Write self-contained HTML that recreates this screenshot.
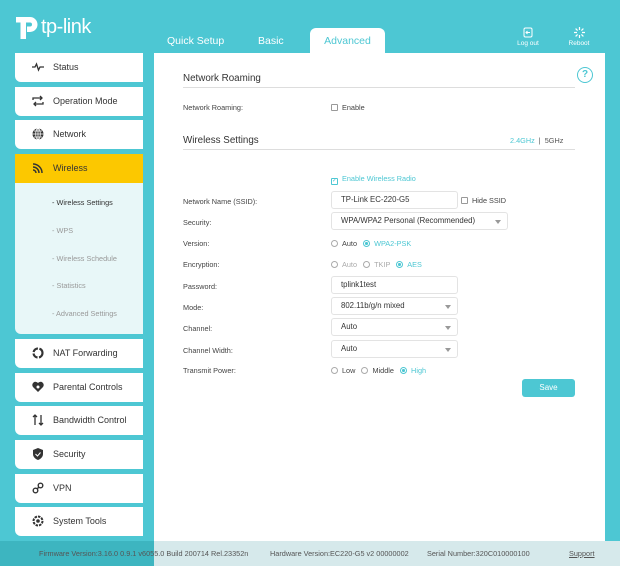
<!DOCTYPE html>
<html><head><meta charset="utf-8"><style>
*{box-sizing:border-box;margin:0;padding:0}
body{width:620px;height:566px;overflow:hidden;background:#4dc7d3;font-family:"Liberation Sans",sans-serif;position:relative}
.abs{position:absolute}
.logo{left:15px;top:14px;color:#fff;font-size:20px;letter-spacing:-0.5px}
.tab{top:35px;color:#fff;font-size:10.5px}
.adv{left:310px;top:28px;width:75px;height:26px;background:#fff;border-radius:6px 6px 0 0;color:#4dc7d3;font-size:10.5px;text-align:center;line-height:26px}
.ti{color:#fff;font-size:6.5px;text-align:center;top:27px}
.panel{left:154px;top:53px;width:451px;height:490px;background:#fff}
.nav{left:15px;width:128px;height:29px;background:#fff;border-radius:0 0 0 6px;font-size:9px;color:#333;line-height:29px;padding-left:38px}
.nav svg{position:absolute;left:17px;top:8px}
.sub{left:15px;top:183px;width:128px;height:151px;background:#e8f7f8;border-radius:0 0 0 6px}
.sub div{position:absolute;left:37px;font-size:7.3px;color:#999}
.h{font-size:9.8px;color:#333}
.line{height:1px;background:#ddd;left:183px;width:392px}
.lab{left:183px;font-size:7.3px;color:#444}
.inp{left:331px;width:127px;height:18px;border:1px solid #e3e3e3;border-radius:3px;font-size:7.8px;color:#333;line-height:16px;padding-left:9px}
.arr{position:absolute;right:6px;top:7px;width:0;height:0;border-left:3px solid transparent;border-right:3px solid transparent;border-top:4px solid #999}
.r{font-size:7.3px;color:#444;left:331px}
.rb{display:inline-block;width:7px;height:7px;border:1px solid #aaa;border-radius:50%;vertical-align:-1px;margin-right:4px}
.rs{border-color:#4dc7d3;background:radial-gradient(#4dc7d3 40%,#fff 50%)}
.cb{display:inline-block;width:7px;height:7px;border:1px solid #999;border-radius:1px;vertical-align:-1px;margin-right:4px}
.foot{left:0;top:541px;width:620px;height:25px;background:#d6e9eb;font-size:7.3px;color:#555;line-height:25px}
</style></head><body>
<div class="abs logo"><svg width="26" height="26" viewBox="0 0 26 26" style="vertical-align:-7px"><path d="M1 3h14a7.5 7.5 0 0 1 0 15h-3v-5.5h3a2 2 0 0 0 0-4H11V25H5.5V8.5H1z" fill="#fff"/></svg>tp-link</div>
<div class="abs tab" style="left:167px">Quick Setup</div>
<div class="abs tab" style="left:258px">Basic</div>
<div class="abs adv">Advanced</div>
<div class="abs ti" style="left:515px;width:26px"><svg width="10" height="11" viewBox="0 0 10 11"><rect x="1" y="1" width="8" height="9" rx="1.5" fill="none" stroke="#fff"/><path d="M7 5.5H3M4.5 4L3 5.5 4.5 7" stroke="#fff" fill="none"/></svg><br>Log out</div>
<div class="abs ti" style="left:566px;width:26px"><svg width="11" height="11" viewBox="0 0 11 11" stroke="#fff" stroke-width="1.2"><path d="M5.5 0v3M5.5 8v3M0 5.5h3M8 5.5h3M1.6 1.6l2 2M7.4 7.4l2 2M9.4 1.6l-2 2M1.6 9.4l2-2"/></svg><br>Reboot</div>

<div class="abs panel"></div>
<div class="abs nav" style="top:53px"><svg width="12" height="12" viewBox="0 0 12 12"><path d="M0 6h3l1.5-3 2 6 1.5-3h4" fill="none" stroke="#333" stroke-width="1.3"/></svg>Status</div>
<div class="abs nav" style="top:87px"><svg width="12" height="12" viewBox="0 0 12 12"><path d="M1 5V3h9M8 1l2 2-2 2M11 7v2H2M4 11L2 9l2-2" fill="none" stroke="#333" stroke-width="1.3"/></svg>Operation Mode</div>
<div class="abs nav" style="top:120px"><svg width="12" height="12" viewBox="0 0 12 12"><circle cx="6" cy="6" r="5.5" fill="#333"/><path d="M0.5 6h11M6 .5v11M2 3h8M2 9h8" stroke="#fff" stroke-width=".8"/><ellipse cx="6" cy="6" rx="2.3" ry="5.5" fill="none" stroke="#fff" stroke-width=".8"/></svg>Network</div>
<div class="abs nav" style="top:154px;background:#fcc800;border-radius:0"><svg width="12" height="12" viewBox="0 0 12 12"><path d="M1 2a9 9 0 0 1 9 9M1 5a6 6 0 0 1 6 6M1 8a3 3 0 0 1 3 3" fill="none" stroke="#333" stroke-width="1.5"/></svg>Wireless</div>
<div class="abs sub"><div style="top:15px;color:#333">- Wireless Settings</div><div style="top:43px">- WPS</div><div style="top:71px">- Wireless Schedule</div><div style="top:98px">- Statistics</div><div style="top:126px">- Advanced Settings</div></div>
<div class="abs nav" style="top:339px"><svg width="12" height="12" viewBox="0 0 12 12"><circle cx="6" cy="6" r="4.5" fill="none" stroke="#333" stroke-width="2.2" stroke-dasharray="6 1.5"/></svg>NAT Forwarding</div>
<div class="abs nav" style="top:373px"><svg width="12" height="12" viewBox="0 0 12 12"><path d="M6 11L1 6a3 3 0 0 1 5-4 3 3 0 0 1 5 4z" fill="#333"/><circle cx="6" cy="6" r="1.5" fill="#fff"/></svg>Parental Controls</div>
<div class="abs nav" style="top:406px"><svg width="12" height="12" viewBox="0 0 12 12"><path d="M3 11V1M1 3l2-2 2 2M9 1v10M7 9l2 2 2-2" fill="none" stroke="#333" stroke-width="1.3"/></svg>Bandwidth Control</div>
<div class="abs nav" style="top:440px"><svg width="12" height="12" viewBox="0 0 12 12"><path d="M6 0l5 2v4c0 3-2.5 5-5 6-2.5-1-5-3-5-6V2z" fill="#333"/><path d="M3.5 6l2 2 3-3.5" stroke="#fff" fill="none"/></svg>Security</div>
<div class="abs nav" style="top:474px"><svg width="12" height="12" viewBox="0 0 12 12"><circle cx="3.5" cy="8.5" r="2.3" fill="none" stroke="#333" stroke-width="1.4"/><circle cx="8.5" cy="3.5" r="2.3" fill="none" stroke="#333" stroke-width="1.4"/><path d="M5 7l2-2" stroke="#333" stroke-width="1.4"/></svg>VPN</div>
<div class="abs nav" style="top:507px"><svg width="12" height="12" viewBox="0 0 12 12"><circle cx="6" cy="6" r="4.5" fill="none" stroke="#333" stroke-width="2" stroke-dasharray="2.5 1"/><circle cx="6" cy="6" r="1.8" fill="#333"/></svg>System Tools</div>

<div class="abs h" style="left:183px;top:73px">Network Roaming</div>
<div class="abs" style="left:577px;top:67px;width:16px;height:16px;border:1.5px solid #4dc7d3;border-radius:50%;color:#4dc7d3;font-size:10px;text-align:center;line-height:13px;font-weight:bold">?</div>
<div class="abs line" style="top:87px"></div>
<div class="abs lab" style="top:103px">Network Roaming:</div>
<div class="abs r" style="top:103px"><span class="cb"></span>Enable</div>
<div class="abs h" style="left:183px;top:135px">Wireless Settings</div>
<div class="abs" style="left:510px;top:136px;font-size:7.3px;color:#4dc7d3">2.4GHz <span style="color:#555">&nbsp;|&nbsp; 5GHz</span></div>
<div class="abs line" style="top:149px"></div>
<div class="abs r" style="top:174px;color:#4dc7d3"><span class="cb" style="border-color:#4dc7d3;font-size:6px;line-height:5px;text-align:center">✓</span>Enable Wireless Radio</div>
<div class="abs lab" style="top:197px">Network Name (SSID):</div>
<div class="abs inp" style="top:191px">TP-Link EC-220-G5</div>
<div class="abs r" style="left:461px;top:196px"><span class="cb"></span>Hide SSID</div>
<div class="abs lab" style="top:218px">Security:</div>
<div class="abs inp" style="top:212px;width:177px">WPA/WPA2 Personal (Recommended)<span class="arr"></span></div>
<div class="abs lab" style="top:239px">Version:</div>
<div class="abs r" style="top:239px"><span class="rb"></span>Auto &nbsp; <span class="rb rs"></span><span style="color:#4dc7d3">WPA2-PSK</span></div>
<div class="abs lab" style="top:260px">Encryption:</div>
<div class="abs r" style="top:260px;color:#aaa"><span class="rb"></span>Auto &nbsp; <span class="rb"></span>TKIP &nbsp; <span class="rb rs"></span><span style="color:#4dc7d3">AES</span></div>
<div class="abs lab" style="top:282px">Password:</div>
<div class="abs inp" style="top:276px">tplink1test</div>
<div class="abs lab" style="top:303px">Mode:</div>
<div class="abs inp" style="top:297px">802.11b/g/n mixed<span class="arr"></span></div>
<div class="abs lab" style="top:324px">Channel:</div>
<div class="abs inp" style="top:318px">Auto<span class="arr"></span></div>
<div class="abs lab" style="top:346px">Channel Width:</div>
<div class="abs inp" style="top:340px">Auto<span class="arr"></span></div>
<div class="abs lab" style="top:366px">Transmit Power:</div>
<div class="abs r" style="top:366px"><span class="rb"></span>Low &nbsp; <span class="rb"></span>Middle &nbsp; <span class="rb rs"></span><span style="color:#4dc7d3">High</span></div>
<div class="abs" style="left:522px;top:379px;width:53px;height:18px;background:#4dc7d3;border-radius:3px;color:#fff;font-size:8px;text-align:center;line-height:18px">Save</div>

<div class="abs foot"><div class="abs" style="left:0;top:0;width:154px;height:25px;background:#3db5c0"></div>
<span class="abs" style="left:39px">Firmware Version:3.16.0 0.9.1 v6055.0 Build 200714 Rel.23352n</span>
<span class="abs" style="left:270px">Hardware Version:EC220-G5 v2 00000002</span>
<span class="abs" style="left:427px">Serial Number:320C010000100</span>
<span class="abs" style="left:569px;text-decoration:underline">Support</span></div>
</body></html>
